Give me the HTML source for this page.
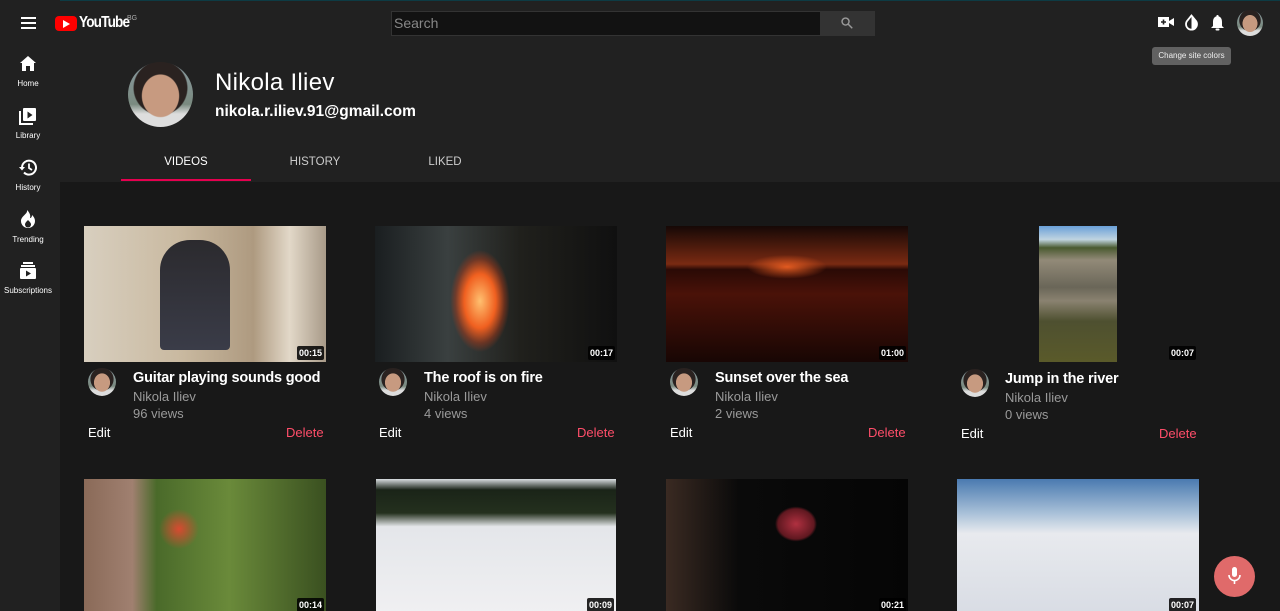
<!DOCTYPE html>
<html><head><meta charset="utf-8"><style>
*{margin:0;padding:0;box-sizing:border-box}
html,body{width:1280px;height:611px;overflow:hidden}
body{background:#181818;font-family:"Liberation Sans",sans-serif;position:relative;color:#fff}
.a{position:absolute}
.top{left:0;top:0;width:1280px;height:182px;background:#212121;border-top:1px solid #0d3b44}
.side{left:0;top:0;width:60px;height:611px;background:#212121}
.nav{width:60px;text-align:center;font-size:8px;color:#fff}
.thumb{width:242px;height:136px}
.dur{background:rgba(0,0,0,.85);font-size:9px;font-weight:bold;padding:2px 2px;border-radius:2px;line-height:10px}
.av{width:28px;height:28px;border-radius:50%;background:radial-gradient(ellipse 35% 40% at 50% 52%,#c79a80 0 80%,transparent 84%),radial-gradient(ellipse 45% 45% at 50% 40%,#2a2220 0 90%,transparent 94%),linear-gradient(#8a9aa0,#7a8a80 65%,#ddd 80%)}
.t{font-size:14.5px;font-weight:bold;letter-spacing:-.2px}
.g{font-size:13px;color:#9a9a9a}
.e{font-size:13px}
.d{font-size:13px;color:#ff4e6a}
</style></head><body>
<div class="a top"></div>
<div class="a side"></div>
<div class="a" style="left:21px;top:17px;width:15px;height:2px;background:#fff;box-shadow:0 5px 0 #fff,0 10px 0 #fff"></div>
<div class="a" style="left:55px;top:16px;width:22px;height:15px;background:#f00;border-radius:4px"></div>
<div class="a" style="left:63px;top:20px;width:0;height:0;border-left:7px solid #fff;border-top:4px solid transparent;border-bottom:4px solid transparent"></div>
<div class="a" style="left:79px;top:14px;font-size:16px;font-weight:bold;letter-spacing:-1px;transform:scaleX(.85);transform-origin:left">YouTube</div>
<div class="a" style="left:127px;top:15px;font-size:7px;color:#aaa">BG</div>
<div class="a" style="left:391px;top:11px;width:430px;height:25px;background:#121212;border:1px solid #333"></div>
<div class="a" style="left:394px;top:15px;font-size:14px;color:#888">Search</div>
<div class="a" style="left:821px;top:11px;width:54px;height:25px;background:#333"></div>
<svg class="a" style="left:840px;top:16px" width="14" height="14" viewBox="0 0 24 24"><circle cx="9.5" cy="9.5" r="6" fill="none" stroke="#999" stroke-width="2.5"/><path d="M14 14l7 7" stroke="#999" stroke-width="2.5"/></svg>
<svg class="a" style="left:1157px;top:15px" width="18" height="14" viewBox="0 0 18 14"><rect x="1" y="2" width="11" height="10" fill="#fff"/><path d="M12 6l5-3v8l-5-3z" fill="#fff"/><path d="M6.5 4.5v5M4 7h5" stroke="#212121" stroke-width="1.6"/></svg>
<svg class="a" style="left:1184px;top:14px" width="15" height="17" viewBox="0 0 15 17"><path d="M7.5 1.5L3 7a5.5 5.5 0 1 0 9 0z" fill="none" stroke="#fff" stroke-width="1.8"/><path d="M7.5 1.5L12 7a5.5 5.5 0 0 1-4.5 8.5z" fill="#fff"/></svg>
<svg class="a" style="left:1210px;top:14px" width="15" height="17" viewBox="0 0 15 17"><path d="M7.5 1a1 1 0 0 1 1 1.2C11 3 12 5 12 8v4l2 2H1l2-2V8c0-3 1-5 3.5-5.8A1 1 0 0 1 7.5 1z" fill="#fff"/><rect x="5.5" y="14.5" width="4" height="2" rx="1" fill="#fff"/></svg>
<div class="a av" style="left:1237px;top:10px;width:26px;height:26px"></div>
<div class="a" style="left:1152px;top:47px;width:79px;height:18px;background:#616161;border-radius:3px;font-size:8px;line-height:18px;text-align:center;color:#eee">Change site colors</div>
<svg class="a" style="left:20px;top:56px" width="16" height="15" viewBox="0 0 16 15"><path d="M8 0L0 7h2v8h4v-5h4v5h4V7h2z" fill="#fff"/></svg>
<div class="a nav" style="left:-2px;top:79px">Home</div>
<svg class="a" style="left:19px;top:107px" width="18" height="18" viewBox="0 0 18 18"><path d="M1 4v13h13" fill="none" stroke="#fff" stroke-width="2"/><rect x="4" y="1" width="13" height="13" rx="1" fill="#fff"/><path d="M8.5 4.5v7l5-3.5z" fill="#212121"/></svg>
<div class="a nav" style="left:-2px;top:131px">Library</div>
<svg class="a" style="left:19px;top:159px" width="18" height="17" viewBox="0 0 18 17"><path d="M3 8.5a7 7 0 1 1 2 5" fill="none" stroke="#fff" stroke-width="2"/><path d="M0 8h6L3 11.5z" fill="#fff"/><path d="M10 4.5v4.5l3 2" fill="none" stroke="#fff" stroke-width="1.8"/></svg>
<div class="a nav" style="left:-2px;top:183px">History</div>
<svg class="a" style="left:21px;top:210px" width="14" height="18" viewBox="0 0 14 18"><path d="M6 0c1 4-6 6-6 11a7 7 0 0 0 14 0c0-3-2-5-3-6 0 2-1 3-2 3 1-3-1-6-3-8z" fill="#fff"/><path d="M7 10c-2 2-3 3-3 4.5a3 3 0 0 0 6 0C10 13 9 12 7 10z" fill="#212121"/></svg>
<div class="a nav" style="left:-2px;top:235px">Trending</div>
<svg class="a" style="left:19px;top:262px" width="18" height="18" viewBox="0 0 18 18"><rect x="4" y="0" width="10" height="2" fill="#fff"/><rect x="2" y="3" width="14" height="2" fill="#fff"/><rect x="1" y="6" width="16" height="11" rx="1" fill="#fff"/><path d="M7 8.5v6l5-3z" fill="#212121"/></svg>
<div class="a nav" style="left:-2px;top:286px">Subscriptions</div>
<div class="a av" style="left:128px;top:62px;width:65px;height:65px"></div>
<div class="a" style="left:215px;top:69px;font-size:24px;letter-spacing:.3px">Nikola Iliev</div>
<div class="a" style="left:215px;top:103px;font-size:15.5px;font-weight:bold">nikola.r.iliev.91@gmail.com</div>
<div class="a" style="left:121px;top:156px;width:130px;text-align:center;font-size:11.5px">VIDEOS</div>
<div class="a" style="left:121px;top:179px;width:130px;height:2px;background:#e5004f"></div>
<div class="a" style="left:250px;top:156px;width:130px;text-align:center;font-size:11.5px;color:#ccc">HISTORY</div>
<div class="a" style="left:380px;top:156px;width:130px;text-align:center;font-size:11.5px;color:#ccc">LIKED</div>
<!-- row 1 -->
<div class="a thumb" style="left:84px;top:226px;background:linear-gradient(90deg,#d8cfbf,#c9b9a0 40%,#ae9a80 70%,#e2d8c8 85%,#a89a88);"></div>
<div class="a" style="left:160px;top:240px;width:70px;height:110px;background:linear-gradient(#2b2a2e,#3a3c48);border-radius:30px 30px 4px 4px"></div>
<div class="a thumb" style="left:375px;top:226px;background:radial-gradient(ellipse 35px 60px at 105px 75px,#ffc070,#f06020 45%,rgba(200,60,20,.4) 70%,transparent 85%),linear-gradient(90deg,#1a1e20,#3a4040 30%,#20201c 60%,#101010)"></div>
<div class="a thumb" style="left:666px;top:226px;background:radial-gradient(ellipse 40px 12px at 50% 30%,#e25a20,transparent),linear-gradient(#160806,#7a2a12 28%,#2a0a06 32%,#4a1208 50%,#180604)"></div>
<div class="a" style="left:1039px;top:226px;width:78px;height:136px;background:linear-gradient(#6aa0d8,#c0d4e0 10%,#4a5a30 16%,#928a78 25%,#6a6658 45%,#8a8270 55%,#4e5030 70%,#5a5a2a 100%)"></div>
<div class="a dur" style="left:297px;top:346px">00:15</div>
<div class="a dur" style="left:588px;top:346px">00:17</div>
<div class="a dur" style="left:879px;top:346px">01:00</div>
<div class="a dur" style="left:1169px;top:346px">00:07</div>
<div class="a av" style="left:88px;top:368px"></div>
<div class="a av" style="left:379px;top:368px"></div>
<div class="a av" style="left:670px;top:368px"></div>
<div class="a av" style="left:961px;top:369px"></div>
<div class="a t" style="left:133px;top:370px">Guitar playing sounds good</div>
<div class="a t" style="left:424px;top:370px">The roof is on fire</div>
<div class="a t" style="left:715px;top:370px">Sunset over the sea</div>
<div class="a t" style="left:1005px;top:371px">Jump in the river</div>
<div class="a g" style="left:133px;top:389px">Nikola Iliev</div>
<div class="a g" style="left:424px;top:389px">Nikola Iliev</div>
<div class="a g" style="left:715px;top:389px">Nikola Iliev</div>
<div class="a g" style="left:1005px;top:390px">Nikola Iliev</div>
<div class="a g" style="left:133px;top:406px">96 views</div>
<div class="a g" style="left:424px;top:406px">4 views</div>
<div class="a g" style="left:715px;top:406px">2 views</div>
<div class="a g" style="left:1005px;top:407px">0 views</div>
<div class="a e" style="left:88px;top:425px">Edit</div>
<div class="a d" style="left:286px;top:425px">Delete</div>
<div class="a e" style="left:379px;top:425px">Edit</div>
<div class="a d" style="left:577px;top:425px">Delete</div>
<div class="a e" style="left:670px;top:425px">Edit</div>
<div class="a d" style="left:868px;top:425px">Delete</div>
<div class="a e" style="left:961px;top:426px">Edit</div>
<div class="a d" style="left:1159px;top:426px">Delete</div>
<!-- row 2 -->
<div class="a thumb" style="left:84px;top:479px;background:radial-gradient(circle 20px at 95px 50px,#d84a30,transparent),linear-gradient(90deg,#8a6a58 0,#a08070 20%,#4a6a2a 30%,#6a8a3a 60%,#3a5020)"></div>
<div class="a thumb" style="left:376px;top:479px;width:240px;background:linear-gradient(#d8dde0,#1a2418 8%,#24301e 25%,#e4e6ea 35%,#f0f0f2)"></div>
<div class="a thumb" style="left:666px;top:479px;background:radial-gradient(ellipse 30px 25px at 130px 45px,#b03040,#601820 60%,transparent 70%),linear-gradient(90deg,#3a2a22,#0a0a0a 30%,#050505)"></div>
<div class="a thumb" style="left:957px;top:479px;background:linear-gradient(#4a7ab0,#a8c0d8 25%,#e8eaee 40%,#d8dce4)"></div>
<div class="a dur" style="left:297px;top:598px">00:14</div>
<div class="a dur" style="left:587px;top:598px">00:09</div>
<div class="a dur" style="left:879px;top:598px">00:21</div>
<div class="a dur" style="left:1169px;top:598px">00:07</div>
<div class="a" style="left:1214px;top:556px;width:41px;height:41px;border-radius:50%;background:#e06a6a"></div>
<svg class="a" style="left:1227px;top:566px" width="15" height="20" viewBox="0 0 15 20"><rect x="5" y="1" width="5" height="10" rx="2.5" fill="#fff"/><path d="M2 9a5.5 5.5 0 0 0 11 0" fill="none" stroke="#fff" stroke-width="1.6"/><path d="M7.5 14.5V18" stroke="#fff" stroke-width="1.6"/></svg>
</body></html>
